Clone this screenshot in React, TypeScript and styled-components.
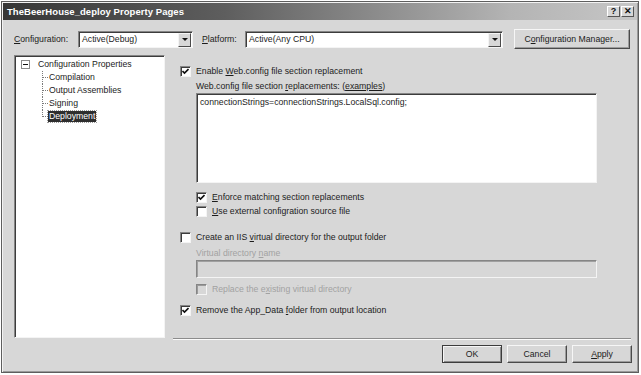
import React from 'react';
import styled, { createGlobalStyle } from 'styled-components';

const GlobalStyle = createGlobalStyle`
  html, body {
    margin: 0;
    padding: 0;
    background: #ffffff;
  }
  body {
    font-family: "Liberation Sans", Arial, sans-serif;
    font-size: 8.7px;
    color: #1c1c1c;
  }
`;

const Window = styled.div`
  margin: 1px 0 0 1px;
  width: 638px;
  height: 372px;
  box-sizing: border-box;
  border: 1px solid #5e5e5e;
  padding: 1px;
  background: #d7d7d7;
  box-shadow: inset 1px 1px 0 #f2f2f2, inset -1px -1px 0 #9a9a9a;
  display: flex;
  flex-direction: column;
`;

const TitleBar = styled.div`
  height: 17px;
  flex-shrink: 0;
  display: flex;
  align-items: center;
  padding: 0 3px 0 4px;
  background: linear-gradient(to right, #363636 0%, #5e5e5e 35%, #b4b4b4 80%, #c6c6c6 100%);
`;

const Title = styled.div`
  flex: 1;
  color: #ffffff;
  font-weight: bold;
  font-size: 9.5px;
  letter-spacing: 0.05px;
`;

const CaptionButton = styled.div`
  width: 13px;
  height: 11px;
  margin-left: 1px;
  box-sizing: border-box;
  background: #d7d7d7;
  border: 1px solid;
  border-color: #ffffff #555555 #555555 #ffffff;
  display: flex;
  align-items: center;
  justify-content: center;
  font-size: 9px;
  font-weight: bold;
  color: #111;
  line-height: 1;
`;

const Body = styled.div`
  flex: 1;
  display: flex;
  flex-direction: column;
  padding: 0 5px 0 11px;
`;

const TopRow = styled.div`
  margin-top: 9px;
  height: 20px;
  display: flex;
  align-items: center;
  padding-right: 2px;
`;

const FieldLabel = styled.span<{ $width: number }>`
  width: ${p => p.$width}px;
  flex-shrink: 0;
`;

const Combo = styled.div<{ $width: number }>`
  width: ${p => p.$width}px;
  height: 17px;
  box-sizing: border-box;
  background: #ffffff;
  border: 1px solid;
  border-color: #858585 #f4f4f4 #f4f4f4 #858585;
  box-shadow: inset 1px 1px 0 #3c3c3c;
  display: flex;
  align-items: stretch;
  flex-shrink: 0;
`;

const ComboText = styled.div`
  flex: 1;
  padding: 0 0 0 3px;
  display: flex;
  align-items: center;
`;

const ComboArrow = styled.div`
  width: 13px;
  margin: 1px 1px 0 0;
  box-sizing: border-box;
  background: #d7d7d7;
  border: 1px solid;
  border-color: #f4f4f4 #4a4a4a #4a4a4a #f4f4f4;
  display: flex;
  align-items: center;
  justify-content: center;

  &::after {
    content: '';
    border-left: 3px solid transparent;
    border-right: 3px solid transparent;
    border-top: 3px solid #111;
  }
`;

const Spacer = styled.div<{ $w: number }>`
  width: ${p => p.$w}px;
  flex-shrink: 0;
`;

const PushButton = styled.div<{ $width: number; $default?: boolean }>`
  width: ${p => p.$width}px;
  height: 18px;
  box-sizing: border-box;
  background: #d7d7d7;
  border: 1px solid;
  border-color: ${p => (p.$default ? '#3c3c3c' : '#f6f6f6 #4a4a4a #4a4a4a #f6f6f6')};
  box-shadow: ${p =>
    p.$default
      ? 'inset 1px 1px 0 #f6f6f6, inset -1px -1px 0 #8a8a8a'
      : 'inset -1px -1px 0 #9c9c9c'};
  display: flex;
  align-items: center;
  justify-content: center;
  flex-shrink: 0;
`;

const TallButton = styled(PushButton)`
  height: 20px;
  margin-left: auto;
`;

const Main = styled.div`
  margin-top: 6px;
  height: 284px;
  display: flex;
`;

const Tree = styled.div`
  width: 151px;
  height: 283px;
  box-sizing: border-box;
  background: #ffffff;
  border: 1px solid;
  border-color: #858585 #f4f4f4 #f4f4f4 #858585;
  box-shadow: inset 1px 1px 0 #3c3c3c;
  padding: 2px 0 0 6px;
`;

const TreeRow = styled.div<{ $indent: number }>`
  height: 13px;
  display: flex;
  align-items: center;
  padding-left: ${p => p.$indent}px;
`;

const Expander = styled.div`
  width: 9px;
  height: 9px;
  box-sizing: border-box;
  border: 1px solid #8a8a8a;
  display: flex;
  align-items: center;
  justify-content: center;
  margin-right: 7px;

  &::after {
    content: '';
    width: 5px;
    height: 1px;
    background: #111;
  }
`;

const Branch = styled.div<{ $last?: boolean }>`
  width: 6px;
  height: 13px;
  align-self: stretch;
  position: relative;
  flex-shrink: 0;

  &::before {
    content: '';
    position: absolute;
    left: 0;
    top: 0;
    height: ${p => (p.$last ? '7px' : '13px')};
    border-left: 1px dotted #7a7a7a;
  }
  &::after {
    content: '';
    position: absolute;
    left: 1px;
    top: 6px;
    width: 5px;
    border-top: 1px dotted #7a7a7a;
  }
`;

const TreeLabel = styled.span<{ $selected?: boolean }>`
  padding: 0 1px;
  line-height: 11px;
  background: ${p => (p.$selected ? '#2e2e2e' : 'transparent')};
  color: ${p => (p.$selected ? '#ffffff' : '#1c1c1c')};
  outline: ${p => (p.$selected ? '1px dotted #9a9a9a' : 'none')};
`;

const Content = styled.div`
  flex: 1;
  margin-left: 8px;
  margin-right: 1px;
  border-bottom: 1px solid #8c8c8c;
  box-shadow: 0 1px 0 #fbfbfb;
  padding-left: 7px;
  display: flex;
  flex-direction: column;
`;

const CheckRow = styled.div<{ $top: number; $disabled?: boolean }>`
  margin-top: ${p => p.$top}px;
  height: 14px;
  display: flex;
  align-items: center;
  color: ${p => (p.$disabled ? '#a2a2a2' : '#1c1c1c')};
`;

const Box = styled.div<{ $disabled?: boolean }>`
  width: 11px;
  height: 11px;
  box-sizing: border-box;
  background: ${p => (p.$disabled ? '#d7d7d7' : '#ffffff')};
  border: 1px solid;
  border-color: #858585 #f4f4f4 #f4f4f4 #858585;
  box-shadow: inset 1px 1px 0 ${p => (p.$disabled ? '#9a9a9a' : '#3c3c3c')};
  margin-right: 5px;
  display: flex;
  align-items: center;
  justify-content: center;
  flex-shrink: 0;
`;

const Indent = styled.div`
  padding-left: 16px;
  display: flex;
  flex-direction: column;
`;

const SubLabel = styled.div<{ $top: number; $disabled?: boolean }>`
  margin-top: ${p => p.$top}px;
  height: 12px;
  line-height: 12px;
  color: ${p => (p.$disabled ? '#a2a2a2' : '#1c1c1c')};
`;

const TextArea = styled.div`
  margin-top: 1px;
  width: 401px;
  height: 90px;
  box-sizing: border-box;
  background: #ffffff;
  border: 1px solid;
  border-color: #858585 #f4f4f4 #f4f4f4 #858585;
  box-shadow: inset 1px 1px 0 #3c3c3c;
  padding: 3px 0 0 3px;
`;

const DisabledInput = styled.div`
  margin-top: 1px;
  width: 401px;
  height: 18px;
  box-sizing: border-box;
  background: #d7d7d7;
  border: 1px solid;
  border-color: #858585 #f4f4f4 #f4f4f4 #858585;
  box-shadow: inset 1px 1px 0 #a0a0a0;
`;

const Footer = styled.div`
  margin-top: 6px;
  display: flex;
  justify-content: flex-end;
  gap: 5px;
`;

const Check = ({ checked, disabled }: { checked?: boolean; disabled?: boolean }) => (
  <Box $disabled={disabled}>
    {checked && (
      <svg width="7" height="7" viewBox="0 0 7 7">
        <path d="M0.5 3 L2.5 5 L6.5 1" stroke="#111" strokeWidth="1.6" fill="none" />
      </svg>
    )}
  </Box>
);

export default function App() {
  return (
    <>
      <GlobalStyle />
      <Window>
        <TitleBar>
          <Title>TheBeerHouse_deploy Property Pages</Title>
          <CaptionButton>?</CaptionButton>
          <CaptionButton>✕</CaptionButton>
        </TitleBar>
        <Body>
          <TopRow>
            <FieldLabel $width={64}><u>C</u>onfiguration:</FieldLabel>
            <Combo $width={115}>
              <ComboText>Active(Debug)</ComboText>
              <ComboArrow />
            </Combo>
            <Spacer $w={9} />
            <FieldLabel $width={43}><u>P</u>latform:</FieldLabel>
            <Combo $width={258}>
              <ComboText>Active(Any CPU)</ComboText>
              <ComboArrow />
            </Combo>
            <TallButton $width={116}>C<u>o</u>nfiguration Manager...</TallButton>
          </TopRow>
          <Main>
            <Tree>
              <TreeRow $indent={0}>
                <Expander />
                <TreeLabel>Configuration Properties</TreeLabel>
              </TreeRow>
              <TreeRow $indent={21}>
                <Branch />
                <TreeLabel>Compilation</TreeLabel>
              </TreeRow>
              <TreeRow $indent={21}>
                <Branch />
                <TreeLabel>Output Assemblies</TreeLabel>
              </TreeRow>
              <TreeRow $indent={21}>
                <Branch />
                <TreeLabel>Signing</TreeLabel>
              </TreeRow>
              <TreeRow $indent={21}>
                <Branch $last />
                <TreeLabel $selected>Deployment</TreeLabel>
              </TreeRow>
            </Tree>
            <Content>
              <CheckRow $top={9}>
                <Check checked />
                <span>Enable <u>W</u>eb.config file section replacement</span>
              </CheckRow>
              <Indent>
                <SubLabel $top={2}>
                  Web.config file section <u>r</u>eplacements: (<u>examples</u>)
                </SubLabel>
                <TextArea>connectionStrings=connectionStrings.LocalSql.config;</TextArea>
                <CheckRow $top={7}>
                  <Check checked />
                  <span><u>E</u>nforce matching section replacements</span>
                </CheckRow>
                <CheckRow $top={0}>
                  <Check />
                  <span><u>U</u>se external configration source file</span>
                </CheckRow>
              </Indent>
              <CheckRow $top={12}>
                <Check />
                <span>Create an IIS <u>v</u>irtual directory for the output folder</span>
              </CheckRow>
              <Indent>
                <SubLabel $top={3} $disabled>
                  Virtual directory <u>n</u>ame
                </SubLabel>
                <DisabledInput />
                <CheckRow $top={4} $disabled>
                  <Check disabled />
                  <span>Replace the e<u>x</u>isting virtual directory</span>
                </CheckRow>
              </Indent>
              <CheckRow $top={7}>
                <Check checked />
                <span>Remove the App_Data <u>f</u>older from output location</span>
              </CheckRow>
            </Content>
          </Main>
          <Footer>
            <PushButton $width={60} $default>OK</PushButton>
            <PushButton $width={60}>Cancel</PushButton>
            <PushButton $width={60}><u>A</u>pply</PushButton>
          </Footer>
        </Body>
      </Window>
    </>
  );
}
